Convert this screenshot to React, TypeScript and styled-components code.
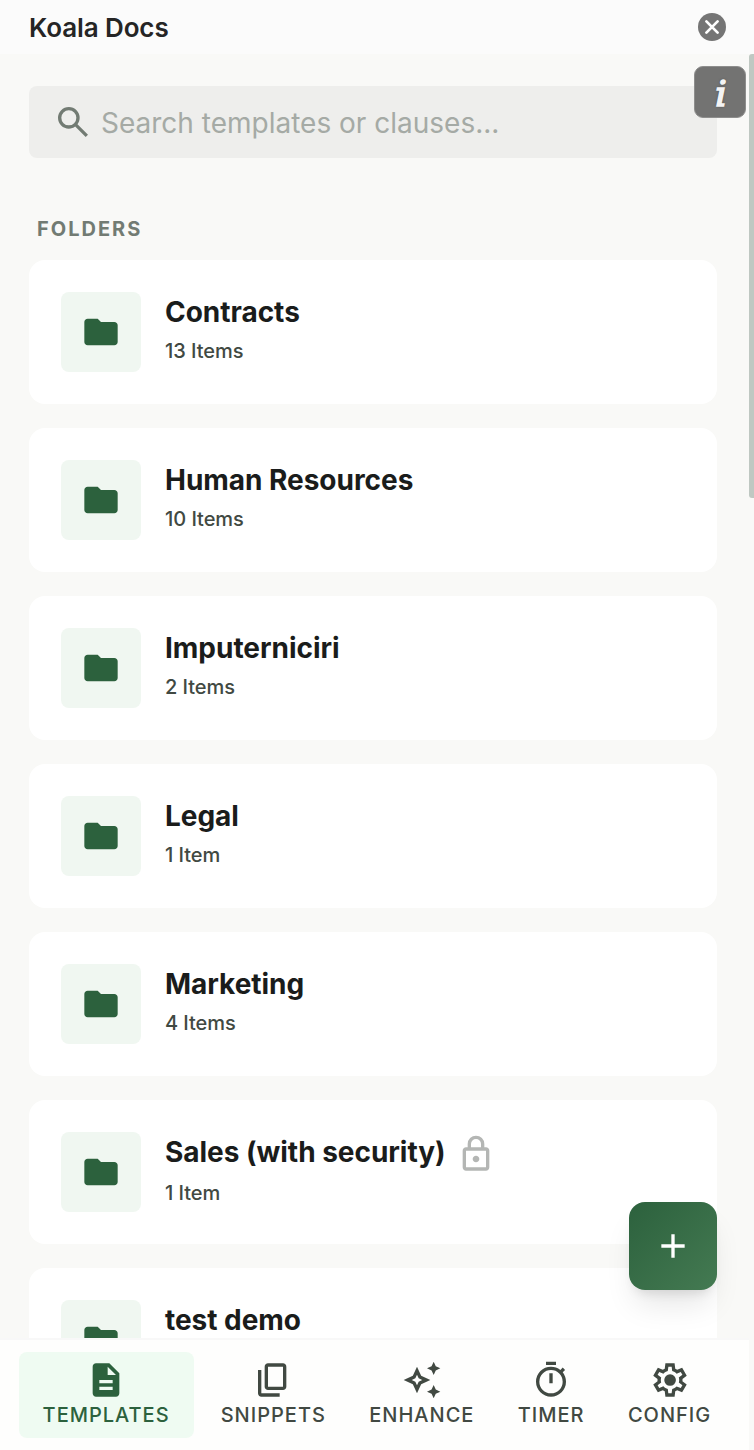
import React from "react";
import styled, { createGlobalStyle, css } from "styled-components";

const GlobalStyle = createGlobalStyle`
  *, *::before, *::after { box-sizing: border-box; }
  html, body { margin: 0; padding: 0; background: #f9f9f7; overflow: hidden; }
  body { font-family: Inter, "Liberation Sans", sans-serif; }
  button { font: inherit; border: 0; padding: 0; background: none; }
`;

const icons = {
  search:
    "M19.6 21l-6.3-6.3q-.75.6-1.725.95T9.5 16q-2.725 0-4.612-1.888T3 9.5t1.888-4.612T9.5 3t4.613 1.888T16 9.5q0 1.1-.35 2.075T14.7 13.3l6.3 6.3zM9.5 14q1.875 0 3.188-1.312T14 9.5t-1.312-3.187T9.5 5 6.313 6.313 5 9.5t1.313 3.188T9.5 14",
  folder:
    "M4 20q-.825 0-1.412-.587T2 18V6q0-.825.588-1.412T4 4h6l2 2h8q.825 0 1.413.588T22 8v10q0 .825-.587 1.413T20 20z",
  lock: "M6 22q-.825 0-1.412-.587T4 20V10q0-.825.588-1.412T6 8h1V6q0-2.075 1.463-3.537T12 1t3.538 1.463T17 6v2h1q.825 0 1.413.588T20 10v10q0 .825-.587 1.413T18 22zm0-2h12V10H6zm6-3q.825 0 1.413-.587T14 15t-.587-1.412T12 13t-1.412.588T10 15t.588 1.413T12 17M9 8h6V6q0-1.25-.875-2.125T12 3t-2.125.875T9 6z",
  add: "M11 13H5v-2h6V5h2v6h6v2h-6v6h-2z",
  document:
    "M8 18h8v-2H8zm0-4h8v-2H8zm-2 8q-.825 0-1.412-.587T4 20V4q0-.825.588-1.412T6 2h8l6 6v12q0 .825-.587 1.413T18 22zm7-13h5l-5-5z",
  copy: "M9 18q-.825 0-1.412-.587T7 16V4q0-.825.588-1.412T9 2h9q.825 0 1.413.588T20 4v12q0 .825-.587 1.413T18 18zm0-2h9V4H9zm-4 6q-.825 0-1.412-.587T3 20V6h2v14h11v2z",
  sparkle:
    "M19 9l-1.25-2.75L15 5l2.75-1.25L19 1l1.25 2.75L23 5l-2.75 1.25zm0 14l-1.25-2.75L15 19l2.75-1.25L19 15l1.25 2.75L23 19l-2.75 1.25zM9 20l-2.5-5.5L1 12l5.5-2.5L9 4l2.5 5.5L17 12l-5.5 2.5zm0-4.85L10 13l2.15-1L10 11 9 8.85 8 11l-2.15 1L8 13z",
  timer:
    "M9 3V1h6v2zm2 11h2V8h-2zm1 8q-1.85 0-3.488-.712T5.65 19.35t-1.937-2.863T3 13t.713-3.488T5.65 6.65t2.863-1.937T12 4q1.55 0 2.975.5t2.675 1.45l1.4-1.4 1.4 1.4-1.4 1.4Q20 8.6 20.5 10.025T21 13q0 1.85-.712 3.488T18.35 19.35t-2.863 1.938T12 22m0-2q2.9 0 4.95-2.05T19 13t-2.05-4.95T12 6 7.05 8.05 5 13t2.05 4.95T12 20",
  settings:
    "m9.25 22-.4-3.2q-.325-.125-.612-.3t-.563-.375L4.7 19.375l-2.75-4.75 2.575-1.95Q4.5 12.5 4.5 12.337v-.675q0-.162.025-.337L1.95 9.375l2.75-4.75 2.975 1.25q.275-.2.575-.375t.6-.3l.4-3.2h5.5l.4 3.2q.325.125.613.3t.562.375l2.975-1.25 2.75 4.75-2.575 1.95q.025.175.025.338v.674q0 .163-.05.338l2.575 1.95-2.75 4.75-2.95-1.25q-.275.2-.575.375t-.6.3l-.4 3.2zM11 20h1.975l.35-2.65q.775-.2 1.438-.587t1.212-.938l2.475 1.025.975-1.7-2.15-1.625q.125-.35.175-.737T17.5 12t-.05-.787-.175-.738l2.15-1.625-.975-1.7-2.475 1.05q-.55-.575-1.212-.962t-1.438-.588L13 4h-1.975l-.35 2.65q-.775.2-1.437.588t-1.213.937L5.55 7.15l-.975 1.7 2.15 1.6q-.125.375-.175.75t-.05.8q0 .4.05.775t.175.75l-2.15 1.625.975 1.7 2.475-1.05q.55.575 1.213.963t1.437.587zm1.05-4.5q1.45 0 2.475-1.025T15.55 12t-1.025-2.475T12.05 8.5q-1.475 0-2.487 1.025T8.55 12t1.013 2.475T12.05 15.5",
};

type IconName = keyof typeof icons;

const Svg = styled.svg`
  display: block;
  width: 40px;
  height: 40px;
  flex: none;
  fill: currentColor;
`;

const Icon = ({ name }: { name: IconName }) => (
  <Svg viewBox="0 0 24 24" aria-hidden="true">
    <path fillRule="evenodd" d={icons[name]} />
  </Svg>
);

const Shell = styled.div`
  position: relative;
  width: 754px;
  height: 1450px;
  overflow: hidden;
  display: flex;
  flex-direction: column;
  background: #f9f9f7;
`;

const Header = styled.header`
  flex: none;
  height: 54px;
  padding: 0 28px 0 29px;
  display: flex;
  align-items: center;
  justify-content: space-between;
  background: #fbfbfb;
`;

const AppTitle = styled.h1`
  margin: 0;
  padding-top: 2px;
  font: 600 26px/32px Inter, sans-serif;
  letter-spacing: -0.1px;
  color: #252525;
`;

const CloseButton = styled.button`
  width: 28px;
  height: 28px;
  svg { display: block; }
`;

const Content = styled.main`
  flex: 1;
  min-height: 0;
  overflow: hidden;
  padding: 32px 37px 0 29px;
`;

const SearchField = styled.label`
  height: 72px;
  padding: 0 24px;
  display: flex;
  align-items: center;
  gap: 8px;
  border-radius: 8px;
  background: #eeeeec;
  color: #727b73;
`;

const Placeholder = styled.span`
  font-size: 28px;
  line-height: 40px;
  padding-top: 1px;
  color: #a5aaa5;
`;

const SectionLabel = styled.h2`
  margin: 57px 0 16px 8px;
  font-size: 20px;
  line-height: 29px;
  font-weight: 700;
  letter-spacing: 2px;
  color: #727b73;
`;

const FolderList = styled.div`
  display: flex;
  flex-direction: column;
  gap: 24px;
`;

const FolderCard = styled.article`
  height: 144px;
  padding: 32px;
  display: flex;
  align-items: center;
  gap: 24px;
  border-radius: 16px;
  background: #fff;
`;

const FolderTile = styled.div`
  flex: none;
  width: 80px;
  height: 80px;
  display: grid;
  place-items: center;
  border-radius: 8px;
  background: #f0f7f1;
  color: #2c613d;
`;

const FolderText = styled.div`
  display: flex;
  flex-direction: column;
  padding-bottom: 3px;
`;

const FolderName = styled.div<{ $locked?: boolean }>`
  display: flex;
  align-items: center;
  gap: 10px;
  height: ${(p) => (p.$locked ? 40 : 36)}px;
  font-size: 28px;
  line-height: 36px;
  font-weight: 700;
  letter-spacing: -0.03px;
  color: #1a1c1b;
  svg { color: #b4b6b4; position: relative; top: 2px; }
`;

const ItemCount = styled.div`
  margin-top: 5px;
  font-size: 20px;
  line-height: 32px;
  font-weight: 500;
  letter-spacing: -0.05px;
  color: #414942;
`;

const Scrollbar = styled.div`
  position: absolute;
  top: 54px;
  right: 0;
  width: 5px;
  height: 444px;
  border-radius: 3px 0 0 3px;
  background: #bfc8c2;
`;

const InfoBadge = styled.button`
  position: absolute;
  top: 66px;
  left: 694px;
  width: 52px;
  height: 52px;
  padding-left: 2px;
  border: 1px solid #8e8e8d;
  border-radius: 9px;
  background: #737372;
  color: #f4f4f4;
  font: italic 400 36px/53px "DejaVu Serif", serif;
  text-align: center;
  text-shadow: 0 0 3px rgba(0, 0, 0, 0.6);
  -webkit-text-stroke: 1.7px #f4f4f4;
`;

const AddButton = styled.button`
  position: absolute;
  top: 1202px;
  left: 629px;
  width: 88px;
  height: 88px;
  display: grid;
  place-items: center;
  border-radius: 16px;
  color: #fff;
  background: linear-gradient(135deg, #2c613d, #447a52);
  box-shadow: 0 20px 30px -6px rgba(0, 0, 0, 0.1), 0 8px 12px -6px rgba(0, 0, 0, 0.12);
`;

const NavBar = styled.nav`
  position: absolute;
  left: 0;
  bottom: 0;
  width: 749px;
  height: 112px;
  padding: 12px 16px 12px 19px;
  display: flex;
  border-top: 2px solid #f8f8f8;
  background: #fefefd;
`;

const NavItem = styled.button<{ $active?: boolean }>`
  flex: none;
  height: 86px;
  padding: 8px 21.7px;
  display: flex;
  flex-direction: column;
  align-items: center;
  border-radius: 8px;
  color: #414942;
  font-size: 20px;
  line-height: 30px;
  font-weight: 500;
  letter-spacing: 1px;
  ${(p) =>
    p.$active &&
    css`
      width: 175px;
      padding: 8px 24.4px 8px 23.6px;
      margin-right: 5px;
      background: #effbf2;
      color: #2c613d;
    `}
`;

const folders = [
  { name: "Contracts", count: "13 Items" },
  { name: "Human Resources", count: "10 Items" },
  { name: "Imputerniciri", count: "2 Items" },
  { name: "Legal", count: "1 Item" },
  { name: "Marketing", count: "4 Items" },
  { name: "Sales (with security)", count: "1 Item", locked: true },
  { name: "test demo", count: "1 Item" },
];

const tabs: { label: string; icon: IconName }[] = [
  { label: "TEMPLATES", icon: "document" },
  { label: "SNIPPETS", icon: "copy" },
  { label: "ENHANCE", icon: "sparkle" },
  { label: "TIMER", icon: "timer" },
  { label: "CONFIG", icon: "settings" },
];

export default function App() {
  return (
    <Shell>
      <GlobalStyle />
      <Header>
        <AppTitle>Koala Docs</AppTitle>
        <CloseButton aria-label="Close">
          <svg width="28" height="28" viewBox="0 0 28 28">
            <circle cx="14" cy="14" r="14" fill="#757575" />
            <path d="M8.4 8.4l11.2 11.2M19.6 8.4L8.4 19.6" stroke="#fff" strokeWidth="2.7" strokeLinecap="round" />
          </svg>
        </CloseButton>
      </Header>
      <Content>
        <SearchField>
          <Icon name="search" />
          <Placeholder>Search templates or clauses...</Placeholder>
        </SearchField>
        <SectionLabel>FOLDERS</SectionLabel>
        <FolderList>
          {folders.map((f) => (
            <FolderCard key={f.name}>
              <FolderTile>
                <Icon name="folder" />
              </FolderTile>
              <FolderText>
                <FolderName $locked={f.locked}>
                  {f.name}
                  {f.locked && <Icon name="lock" />}
                </FolderName>
                <ItemCount>{f.count}</ItemCount>
              </FolderText>
            </FolderCard>
          ))}
        </FolderList>
      </Content>
      <Scrollbar />
      <InfoBadge aria-label="Information">i</InfoBadge>
      <AddButton aria-label="Add">
        <Icon name="add" />
      </AddButton>
      <NavBar>
        {tabs.map((t, i) => (
          <NavItem key={t.label} $active={i === 0}>
            <Icon name={t.icon} />
            {t.label}
          </NavItem>
        ))}
      </NavBar>
    </Shell>
  );
}
